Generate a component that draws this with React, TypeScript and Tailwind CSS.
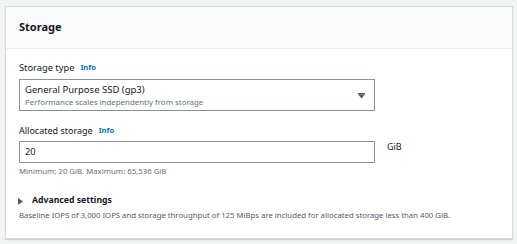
import React from "react";

export default function App() {
  return (
    <div
      className="w-[517px] h-[244px] bg-[#f2f3f3] pt-[6px] pl-[5px] pr-[4px]"
      style={{ fontFamily: '"Noto Sans", "Open Sans", Arial, sans-serif' }}
    >
      <div className="border border-[#d5dbdb] bg-white h-[233px] shadow-[0_1px_1px_rgba(0,28,36,0.15)]">
        <div className="h-[42px] bg-[#fafafa] border-b border-[#eaeded] flex items-center pl-[13px] pb-[3px]">
          <h2 className="text-[11px] font-bold text-[#16191f] leading-none">Storage</h2>
        </div>
        <div className="pl-[13px] pt-[11px]">
          <div className="flex items-center gap-[6px] h-[16px]">
            <span className="text-[9.3px] text-[#16191f]">Storage type</span>
            <span className="text-[7.6px] font-bold text-[#0073bb]">Info</span>
          </div>
          <div className="mt-[3px] w-[356px] h-[32px] border border-[#879596] flex items-center pl-[5px] pr-[9px]">
            <div className="flex-1 flex flex-col">
              <span className="text-[9.5px] text-[#16191f] leading-[14px]">General Purpose SSD (gp3)</span>
              <span className="text-[7.9px] text-[#687078] leading-[11px]">Performance scales independently from storage</span>
            </div>
            <svg width="7" height="6" viewBox="0 0 7 6" className="mt-[2px]">
              <rect x="0" y="0" width="7" height="1.2" fill="#545b64" />
              <path d="M0 1.2 L7 1.2 L3.5 5.5 Z" fill="#545b64" />
            </svg>
          </div>
          <div className="mt-[12px] flex items-center gap-[6px] h-[16px]">
            <span className="text-[9px] text-[#16191f]">Allocated storage</span>
            <span className="text-[7.6px] font-bold text-[#0073bb]">Info</span>
          </div>
          <div className="mt-[2px] flex items-start">
            <div className="w-[356px] h-[22px] border border-[#879596] flex items-center pl-[5px]">
              <span className="text-[9.3px] text-[#16191f]">20</span>
            </div>
            <span className="ml-[12px] text-[9px] text-[#16191f] leading-[14px] -mt-[1px]">GiB</span>
          </div>
          <div className="mt-[2px] text-[7.8px] text-[#687078] leading-[12px]">Minimum: 20 GiB. Maximum: 65,536 GiB</div>
          <div className="mt-[17px] flex items-center h-[14px]">
            <svg width="5" height="7" viewBox="0 0 5 7" className="-ml-[1px]">
              <path d="M0 0 L5 3.5 L0 7 Z" fill="#545b64" />
            </svg>
            <span className="ml-[9px] text-[8.7px] font-bold text-[#16191f]">Advanced settings</span>
          </div>
          <div className="mt-[1px] text-[7.75px] text-[#545b64] leading-[12px]">
            Baseline IOPS of 3,000 IOPS and storage throughput of 125 MiBps are included for allocated storage less than 400 GiB.
          </div>
        </div>
      </div>
    </div>
  );
}
